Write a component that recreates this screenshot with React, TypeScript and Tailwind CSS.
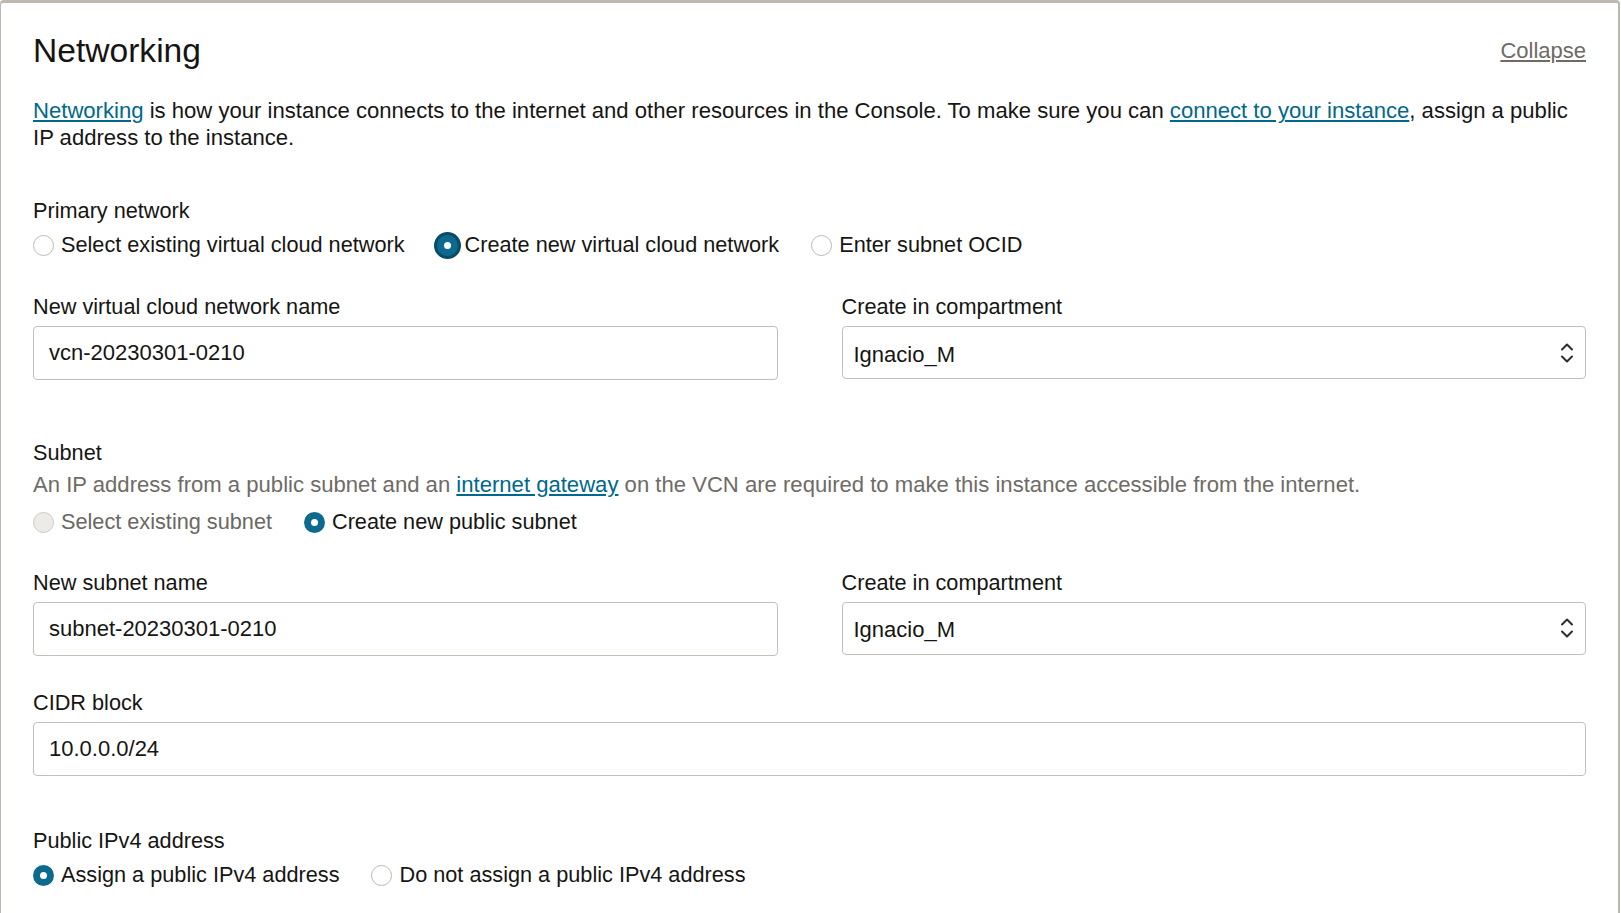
import type { ReactNode } from "react";
import clsx from "clsx";

interface RadioProps {
  label: string;
  checked?: boolean;
  disabled?: boolean;
  focused?: boolean;
}

function Radio({ label, checked, disabled, focused }: RadioProps) {
  return (
    <label className="flex items-center gap-[7px] whitespace-nowrap text-[21.7px]">
      <span
        className={clsx(
          "flex h-[21px] w-[21px] shrink-0 items-center justify-center rounded-full",
          checked && "bg-[#0e6a8d]",
          !checked && !disabled && "border border-[#bdb8b1] bg-white",
          disabled && "border border-[#cdc9c3] bg-[#ecebe8]",
          focused && "ring-[3px] ring-[#0a4b68]",
        )}
      >
        {checked && <span className="h-[7px] w-[7px] rounded-full bg-white" />}
      </span>
      <span className={disabled ? "text-[#6b6762]" : "text-[#161513]"}>
        {label}
      </span>
    </label>
  );
}

function Chevrons() {
  return (
    <svg
      width="14"
      height="22"
      viewBox="0 0 14 22"
      fill="none"
      stroke="#312d2a"
      strokeWidth="2"
      strokeLinecap="round"
      strokeLinejoin="round"
    >
      <path d="M2 7.5 L7 2.5 L12 7.5" />
      <path d="M2 14.5 L7 19.5 L12 14.5" />
    </svg>
  );
}

function Label({ children }: { children: ReactNode }) {
  return <div className="text-[21.7px]">{children}</div>;
}

function Field({
  label,
  gap = "mt-2",
  children,
}: {
  label: string;
  gap?: string;
  children: ReactNode;
}) {
  return (
    <div>
      <Label>{label}</Label>
      <div className={gap}>{children}</div>
    </div>
  );
}

function TextBox({ value }: { value: string }) {
  return (
    <input
      readOnly
      defaultValue={value}
      className="h-[54px] w-full rounded-[4px] border border-[#c4c0b9] bg-white px-[15px] text-[#161513] outline-none"
    />
  );
}

function SelectBox({ value }: { value: string }) {
  return (
    <div className="flex h-[53px] w-full items-center justify-between rounded-[4px] border border-[#c4c0b9] bg-white pl-[11px] pr-[11px]">
      <span className="pt-[5px]">{value}</span>
      <Chevrons />
    </div>
  );
}

const link = "text-[#00688c] underline";

export default function App() {
  return (
    <div className="min-h-[913px] w-[1620px] bg-white font-['Liberation_Sans',Arial,sans-serif] text-[22px] leading-[26.5px] text-[#161513]">
      <div className="min-h-[913px] rounded-t-[4px] border-t-[3px] border-r-2 border-l border-[#bdb8b0] px-8 pt-[28px]">
        <div className="flex items-start justify-between">
          <h2 className="text-[33.6px] leading-[40px] font-normal">Networking</h2>
          <a className="mt-[7px] text-[#6f6a64] underline">Collapse</a>
        </div>

        <p className="mt-[27px] text-[22.1px]">
          <a className={link}>Networking</a> is how your instance connects to
          the internet and other resources in the Console. To make sure you can{" "}
          <a className={link}>connect to your instance</a>, assign a public IP
          address to the instance.
        </p>

        <div className="mt-[47px]">
          <Label>Primary network</Label>
        </div>
        <div className="mt-[7px] flex h-[28px] items-center gap-8">
          <Radio label="Select existing virtual cloud network" />
          <Radio label="Create new virtual cloud network" checked focused />
          <Radio label="Enter subnet OCID" />
        </div>

        <div className="mt-[34px] grid grid-cols-2 gap-x-16">
          <Field label="New virtual cloud network name" gap="mt-[6px]">
            <TextBox value="vcn-20230301-0210" />
          </Field>
          <Field label="Create in compartment" gap="mt-[6px]">
            <SelectBox value="Ignacio_M" />
          </Field>
        </div>

        <div className="mt-[60px]">
          <Label>Subnet</Label>
        </div>
        <p className="mt-[5px] text-[22.1px] text-[#6f6b66]">
          An IP address from a public subnet and an{" "}
          <a className={link}>internet gateway</a> on the VCN are required to
          make this instance accessible from the internet.
        </p>
        <div className="mt-[10px] flex h-[28px] items-center gap-8">
          <Radio label="Select existing subnet" disabled />
          <Radio label="Create new public subnet" checked />
        </div>

        <div className="mt-[34px] grid grid-cols-2 gap-x-16">
          <Field label="New subnet name" gap="mt-[5px]">
            <TextBox value="subnet-20230301-0210" />
          </Field>
          <Field label="Create in compartment" gap="mt-[5px]">
            <SelectBox value="Ignacio_M" />
          </Field>
        </div>

        <div className="mt-[34px]">
          <Field label="CIDR block" gap="mt-[6px]">
            <TextBox value="10.0.0.0/24" />
          </Field>
        </div>

        <div className="mt-[52px]">
          <Label>Public IPv4 address</Label>
        </div>
        <div className="mt-[7px] flex h-[28px] items-center gap-8">
          <Radio label="Assign a public IPv4 address" checked />
          <Radio label="Do not assign a public IPv4 address" />
        </div>
      </div>
    </div>
  );
}
